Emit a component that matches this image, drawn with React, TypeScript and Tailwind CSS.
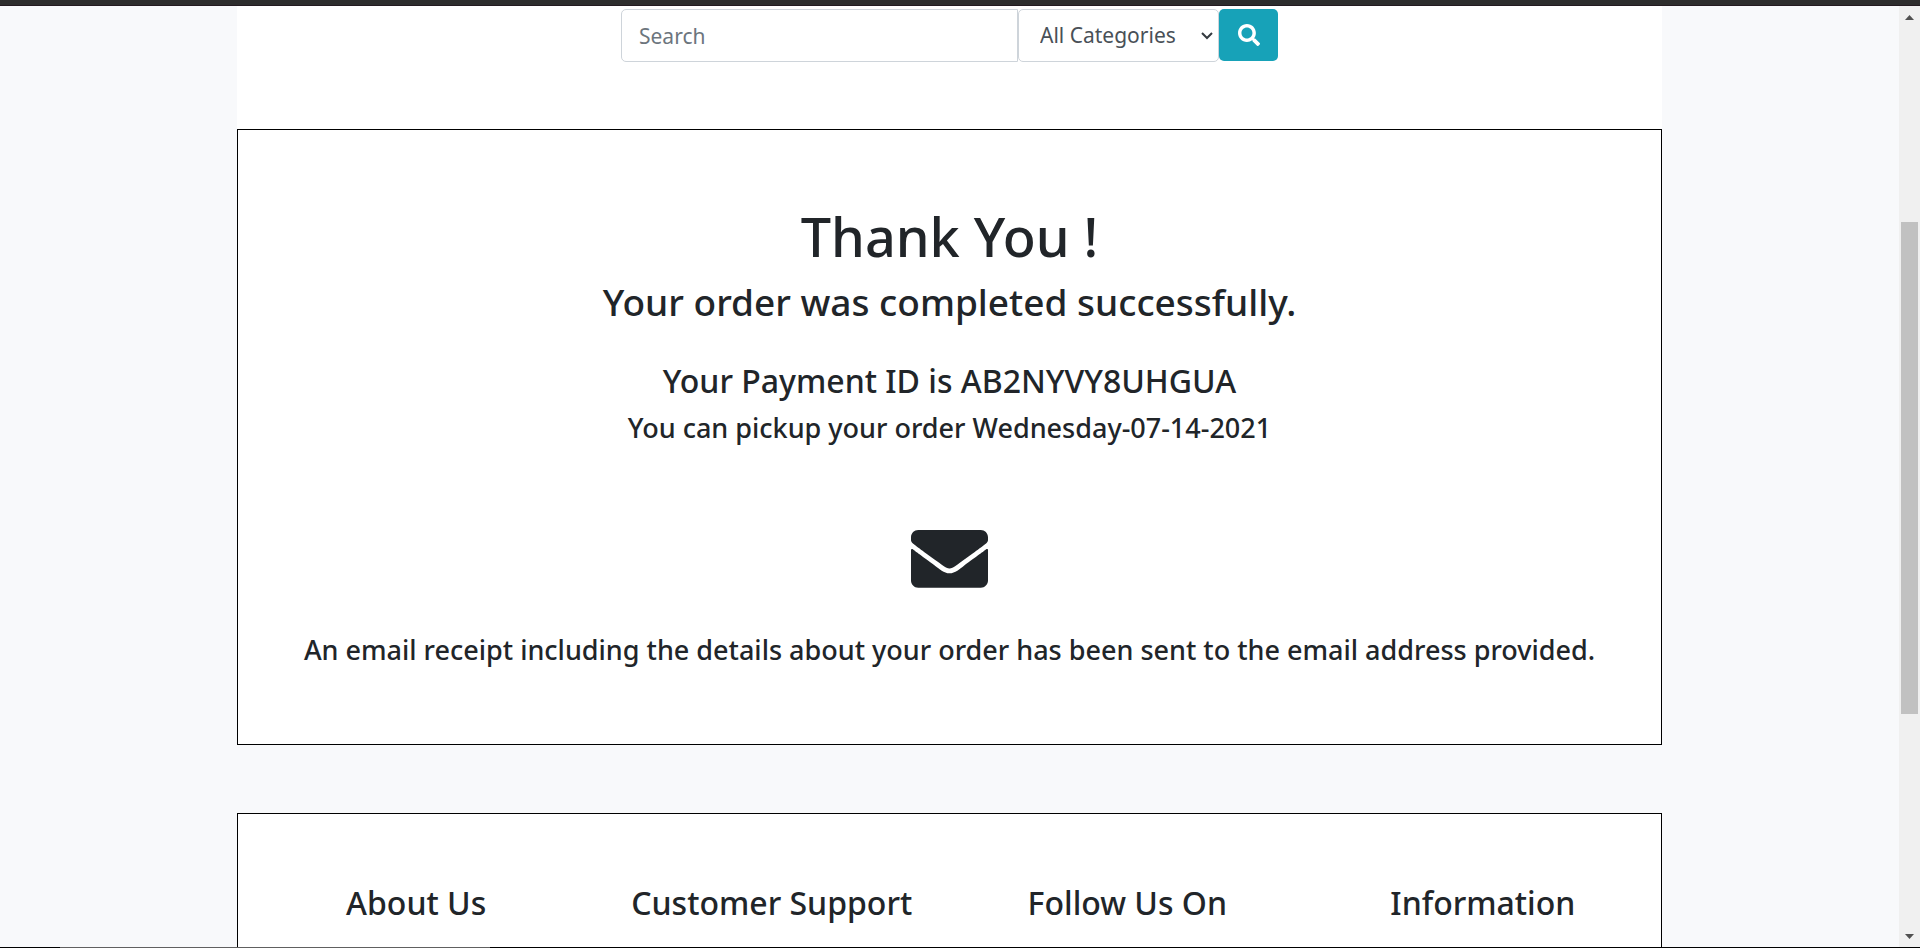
import React from "react";
import { FaEnvelope, FaSearch } from "react-icons/fa";

const footerSections = ["About Us", "Customer Support", "Follow Us On", "Information"];

function SearchForm() {
  return (
    <form
      className="mx-auto flex w-full max-w-[657px] items-start text-[21px]"
      onSubmit={(event) => event.preventDefault()}
    >
      <input
        type="search"
        aria-label="Search"
        placeholder="Search"
        className="h-[53px] min-w-0 flex-1 rounded-l-[5px] border border-[#ced4da] bg-white px-[17px] text-[#495057] placeholder:text-[#6c757d]"
      />
      <div className="relative">
        <select
          aria-label="Category"
          className="h-[53px] w-[201px] appearance-none rounded-[5px] border border-[#ced4da] bg-white pl-[21px] text-[#495057]"
        >
          <option>All Categories</option>
        </select>
        <svg
          viewBox="0 0 12 8"
          className="pointer-events-none absolute top-[23px] right-[6px] h-2 w-3"
          fill="none"
          stroke="#343a40"
          strokeWidth="2"
          aria-hidden="true"
        >
          <path d="M1 1l5 5 5-5" />
        </svg>
      </div>
      <button
        type="submit"
        aria-label="Submit search"
        className="flex h-[52px] w-[59px] items-center justify-center rounded-[5px] bg-[#17a2b8] text-white"
      >
        <FaSearch className="size-[22px]" />
      </button>
    </form>
  );
}

function Confirmation() {
  return (
    <section className="border border-black bg-white px-4 pt-[72px] pb-[76px] text-center font-medium">
      <h1 className="text-[54px] leading-[68px]">Thank You !</h1>
      <h2 className="mt-2 text-[37px] leading-[48px]">Your order was completed successfully.</h2>
      <h3 className="mt-[34px] text-[32px] leading-[42px]">Your Payment ID is AB2NYVY8UHGUA</h3>
      <h4 className="mt-2 text-[27px] leading-[36px]">You can pickup your order Wednesday-07-14-2021</h4>
      <svg viewBox="0 64 512 384" className="mx-auto mt-[84px] w-[77px]" aria-hidden="true">
        <FaEnvelope size={512} />
      </svg>
      <h4 className="mt-11 text-[27px] leading-[36px]">
        An email receipt including the details about your order has been sent to the email address provided.
      </h4>
    </section>
  );
}

function Footer() {
  return (
    <footer className="mt-[68px] grid grid-cols-4 border border-black bg-white pt-[68px] pb-24 text-center font-medium">
      {footerSections.map((title) => (
        <h3 key={title} className="text-[32px] leading-[42px]">
          {title}
        </h3>
      ))}
    </footer>
  );
}

function ScrollTrack() {
  return (
    <div className="flex w-[21px] shrink-0 flex-col items-center bg-[#f0f0f0]" aria-hidden="true">
      <svg viewBox="0 0 9 5" className="mt-[9px] h-[5px] w-[9px] shrink-0" fill="#505050">
        <path d="M0 5L4.500 0L9 5z" />
      </svg>
      <div className="flex w-full flex-1 flex-col px-0.5">
        <div className="grow-[202]" />
        <div className="grow-[492] bg-[#c1c1c1]" />
        <div className="grow-[220]" />
      </div>
      <svg viewBox="0 0 9 5" className="mb-[8px] h-[5px] w-[9px] shrink-0" fill="#505050">
        <path d="M0 0L4.500 5L9 0z" />
      </svg>
    </div>
  );
}

export default function App() {
  return (
    <div className="flex h-screen flex-col overflow-hidden bg-[#f8f9fb] font-['Noto_Sans','Open_Sans',sans-serif] text-[#212529]">
      <div className="h-1.5 shrink-0 border-b border-[#231a20] bg-[#2d2d2d]" />
      <div className="flex min-h-0 flex-1">
        <main className="min-w-0 flex-1 overflow-hidden">
          <div className="mx-auto w-3/4">
            <div className="bg-white pt-[3px] pb-[67px]">
              <SearchForm />
            </div>
            <Confirmation />
            <Footer />
          </div>
        </main>
        <ScrollTrack />
      </div>
      <div className="flex h-px shrink-0 bg-black">
        <div className="ml-[60px] w-[430px] bg-[#606060]" />
      </div>
    </div>
  );
}
